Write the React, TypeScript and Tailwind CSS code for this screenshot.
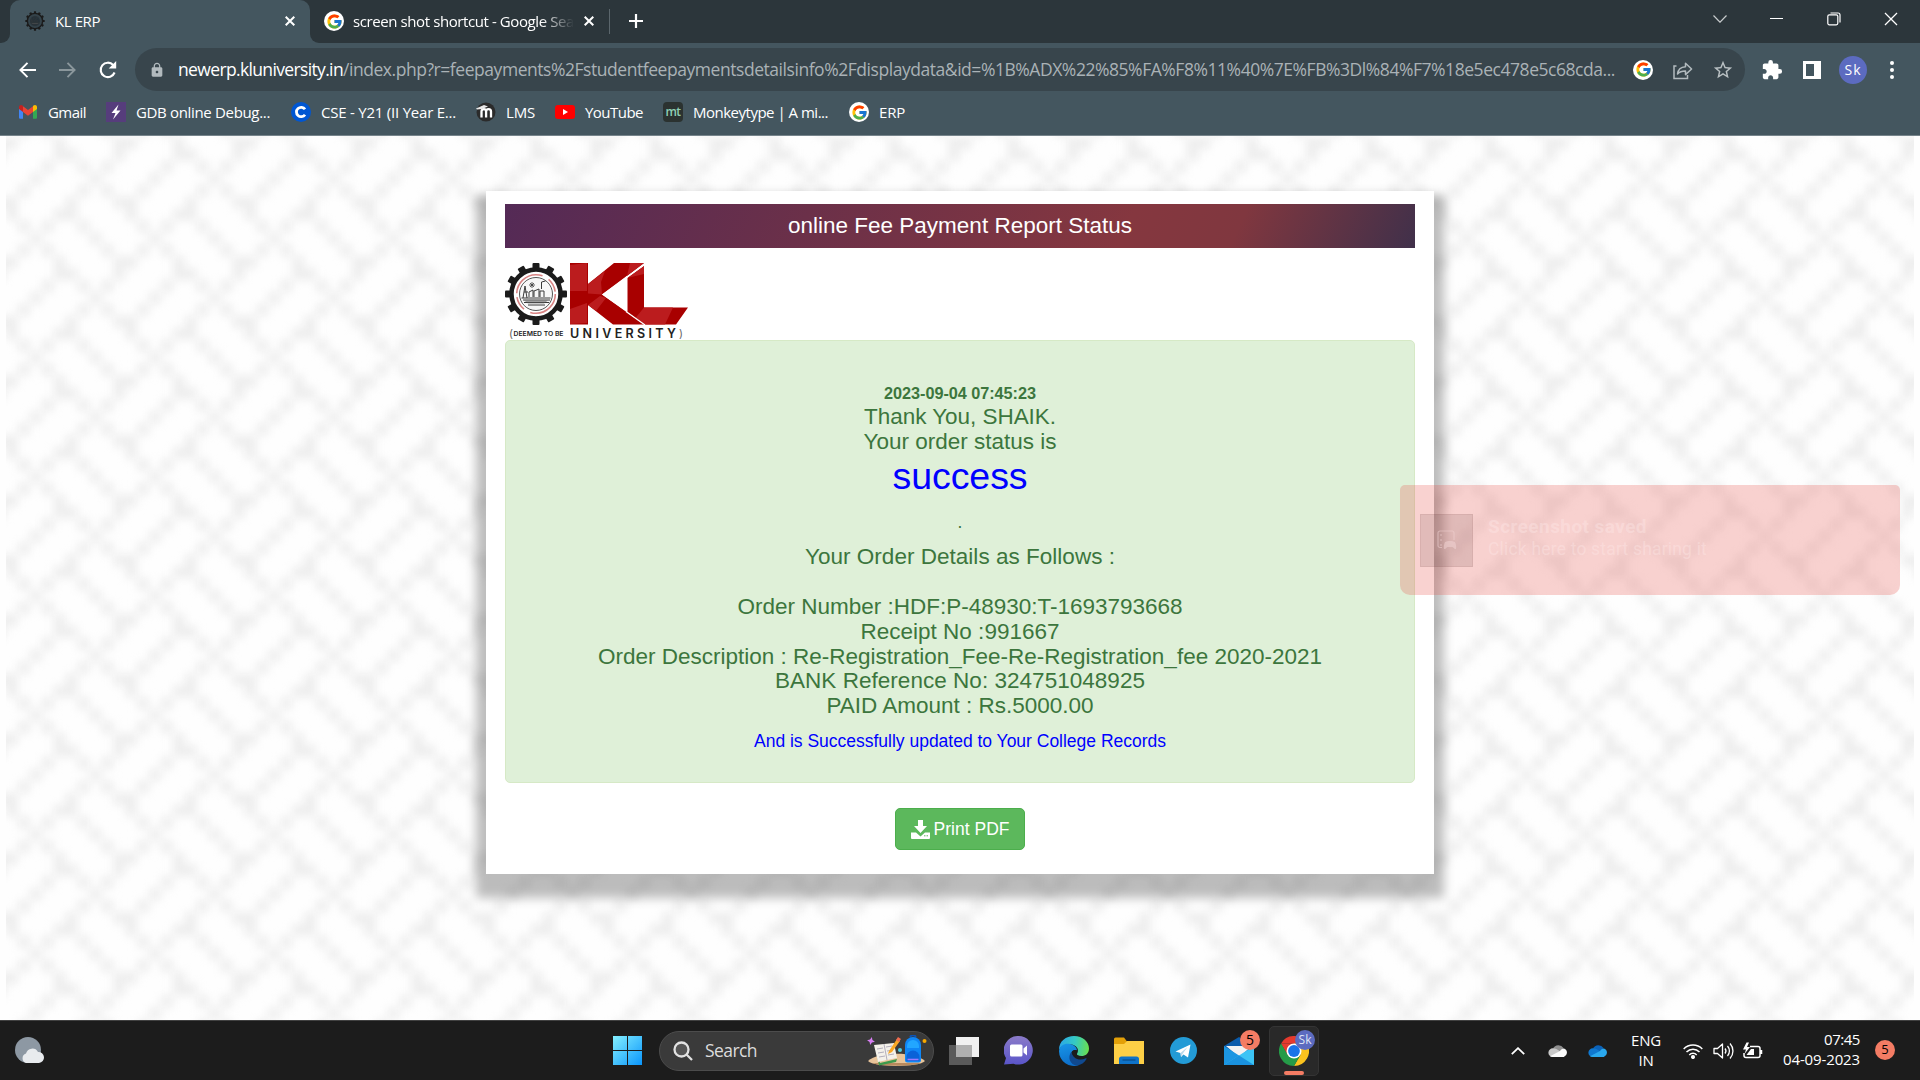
import React, { useLayoutEffect, useRef } from "react";
import { FcGoogle } from "react-icons/fc";
import { MdExtension, MdLock, MdStarBorder } from "react-icons/md";

/** Single line of text whose tracking is adjusted so it fills the given width. */
function Fit({ w, className = "", children }: { w: number; className?: string; children: React.ReactNode }) {
  const ref = useRef<HTMLSpanElement>(null);
  useLayoutEffect(() => {
    const el = ref.current;
    if (!el) return;
    const apply = () => {
      el.style.letterSpacing = "0px";
      const n = (el.textContent || "").length;
      const natural = el.getBoundingClientRect().width;
      el.style.letterSpacing = `${(w - natural) / n}px`;
    };
    apply();
    document.fonts?.ready.then(apply);
  }, [w]);
  return (
    <span ref={ref} className={`inline-block whitespace-pre ${className}`}>
      {children}
    </span>
  );
}

function GoogleBadge() {
  return (
    <span className="flex size-5 shrink-0 items-center justify-center rounded-full bg-white">
      <FcGoogle size={17} />
    </span>
  );
}

const teeth = Array.from({ length: 12 }, (_, i) => i * 30);

function Gear({ dark = false }: { dark?: boolean }) {
  return (
    <g>
      {teeth.map((a) => (
        <rect key={a} x="-3.500" y="-31" width="7" height="9" rx="1" fill="#1b1b1b" transform={`rotate(${a})`} />
      ))}
      <circle r="24.5" fill={dark ? "#34434b" : "#fff"} stroke="#1b1b1b" strokeWidth="4.500" />
      {!dark && <circle r="19.3" fill="none" stroke="#d98484" strokeWidth="1.6" strokeDasharray="36 7 14 4" />}
      <circle r="16.5" fill={dark ? "#25323a" : "#f7f7f7"} stroke="#444" strokeWidth="0.9" />
      <g stroke="#3a3a3a" strokeWidth="1" fill="none">
        <path d="M-13 6h27M-12 8.500h25M-8 11h17M-14.500 4h29" />
        <path d="M-7 3v-5l4-2v7M-2 3v-6l5-2v8M4 3v-6h4v6M5.500 -5v-7l4-1M-13 4l2-12 2 12M-12 -2h4" />
        <path d="M-4 -12v6M-7 -9h6M-6 -11l4 4M-2 -11l-4 4" strokeWidth="0.8" />
      </g>
      <path d="M-12 6.500h24l-4 3h-16z" fill="#555" opacity=".55" />
    </g>
  );
}

function Close({ size = 10, w = 2 }: { size?: number; w?: number }) {
  return (
    <svg width={size} height={size} viewBox="0 0 10 10" className="shrink-0">
      <path d="M.7 .7l8.600 8.600M9.300 .7L.7 9.300" stroke="#fff" strokeWidth={w} />
    </svg>
  );
}

function TabStrip() {
  return (
    <div className="flex h-[43px] bg-[#2c363b] text-white">
      <div className="flex w-[10px] items-end bg-[#44565f]">
        <div className="h-full w-full rounded-br-[9px] bg-[#2c363b]" />
      </div>
      <div className="flex w-[300px] items-center rounded-t-[10px] bg-[#44565f] pr-[15px] pb-px pl-[15px]">
        <svg width="20" height="20" viewBox="-32 -32 64 64">
          <Gear dark />
        </svg>
        <div className="ml-[10px] flex-1 text-[15px]">
          <Fit w={45}>KL ERP</Fit>
        </div>
        <Close />
      </div>
      <div className="flex bg-[#44565f]">
        <div className="flex w-[300px] items-center rounded-bl-[9px] bg-[#2c363b] pb-px pl-[14px]">
          <GoogleBadge />
          <div className="ml-[9px] w-[221px] text-[15px] [mask-image:linear-gradient(to_right,black_85%,transparent)]">
            <Fit w={221}>screen shot shortcut - Google Sea</Fit>
          </div>
          <div className="ml-[10px]">
            <Close />
          </div>
          <div className="ml-[15px] h-[25px] w-px shrink-0 bg-[#5b666c]" />
        </div>
      </div>
      <div className="flex flex-1 items-center bg-[#2c363b] pb-px pl-[19px]">
        <svg width="14" height="14" viewBox="0 0 14 14">
          <path d="M7 0v14M0 7h14" stroke="#fff" strokeWidth="2.200" />
        </svg>
      </div>
      <div className="flex h-[37px] items-center bg-[#2c363b] pr-px text-white">
        <div className="flex w-[57px] justify-center">
          <svg width="14" height="8" viewBox="0 0 14 8">
            <path d="M.5 .5L7 7.200 13.500 .5" fill="none" stroke="#c8cccd" strokeWidth="1.200" />
          </svg>
        </div>
        <div className="flex w-[57px] justify-center">
          <div className="h-px w-[13px] bg-white" />
        </div>
        <div className="flex w-[57px] justify-center">
          <svg width="14" height="14" viewBox="0 0 14 14" fill="none" stroke="#fff" strokeWidth="1.200">
            <rect x=".8" y="2.800" width="10" height="10" rx="1.500" />
            <path d="M3.500 1h7.500a2 2 0 0 1 2 2v7.500" />
          </svg>
        </div>
        <div className="flex w-[57px] justify-center">
          <Close size={14} w={0.9} />
        </div>
      </div>
    </div>
  );
}

function Toolbar() {
  return (
    <div className="flex h-[53px] items-center bg-[#44565f]">
      <div className="flex w-[135px] items-center pl-[19px]">
        <svg width="17" height="16" viewBox="0 0 17 16" fill="none" stroke="#fff" strokeWidth="1.900">
          <path d="M17 8H1.800M8.500 .8L1.400 8l7.100 7.200" />
        </svg>
        <svg width="17" height="16" viewBox="0 0 17 16" fill="none" stroke="#8b979c" strokeWidth="1.900" className="ml-[23px]">
          <path d="M0 8h15.200M8.500 .8L15.600 8l-7.100 7.200" />
        </svg>
        <svg width="18" height="18" viewBox="0 0 18 18" className="ml-[23px]">
          <path d="M15.600 11.500A7.200 7.200 0 1 1 14.200 4" fill="none" stroke="#fff" strokeWidth="2.100" />
          <path d="M17.200 0v7.500H9.700z" fill="#fff" />
        </svg>
      </div>
      <div className="flex h-[43px] w-[1610px] items-center rounded-full bg-[#38454c] pl-[14px]">
        <MdLock size={16} color="#b2babe" />
        <div className="ml-[13px] flex w-[1439px] text-[17.5px] text-[#aab2b6]">
          <Fit w={165} className="text-white">newerp.kluniversity.in</Fit>
          <Fit w={1272}>
            /index.php?r=feepayments%2Fstudentfeepaymentsdetailsinfo%2Fdisplaydata&amp;id=%1B%ADX%22%85%FA%F8%11%40%7E%FB%3Dl%84%F7%18e5ec478e5c68cda...
          </Fit>
        </div>
        <div className="ml-[16px]">
          <GoogleBadge />
        </div>
        <svg width="20" height="20" viewBox="0 0 20 20" fill="none" stroke="#b2babe" strokeWidth="1.500" className="ml-[20px]">
          <path d="M3.500 6H1v12.500h13.500V15" />
          <path d="M4.500 14c.5-4.500 3-7 8-7.300V3.200L18.600 9l-6.100 5.600v-3.500c-3.500 0-6 .7-8 2.900z" strokeLinejoin="round" />
        </svg>
        <MdStarBorder size={22} color="#b9c0c3" className="ml-[19px]" />
      </div>
      <div className="flex flex-1 items-center text-white">
        <MdExtension size={22} className="ml-[16px]" />
        <div className="ml-[20px] h-[18px] w-[18px] border-[3px] border-r-[7px] border-white" />
        <div className="ml-[18px] flex size-7 items-center justify-center rounded-full bg-[#5c6bc0] text-[14px]">
          <Fit w={17}>Sk</Fit>
        </div>
        <div className="ml-[23px] flex flex-col gap-[3px]">
          <i className="size-1 rounded-full bg-white" />
          <i className="size-1 rounded-full bg-white" />
          <i className="size-1 rounded-full bg-white" />
        </div>
      </div>
    </div>
  );
}

function Gmail() {
  return (
    <svg width="20" height="20" viewBox="0 0 20 20">
      <path d="M1 5v10.500c0 .8.6 1.300 1.300 1.300H5V8z" fill="#4285f4" />
      <path d="M19 5v10.500c0 .8-.6 1.300-1.300 1.300H15V8z" fill="#34a853" />
      <path d="M5 4.200V10l5 3.800 5-3.800V4.200L10 8z" fill="#ea4335" />
      <path d="M1 5c0-2 2.200-2.600 3.500-1.500L5 4v6L1 7z" fill="#c5221f" />
      <path d="M19 5c0-2-2.200-2.600-3.500-1.500L15 4v6l4-3z" fill="#fbbc04" />
    </svg>
  );
}

function Bookmark({ icon, w, total, children }: { icon: React.ReactNode; w: number; total: string; children: string }) {
  return (
    <div className={`flex items-center ${total}`}>
      <span className="mr-[10px] flex size-5 shrink-0 items-center justify-center">{icon}</span>
      <Fit w={w}>{children}</Fit>
    </div>
  );
}

function Bookmarks() {
  return (
    <div className="flex h-[40px] items-center border-b border-[#76848b] bg-[#44565f] pb-[7px] pl-[18px] text-[15px] leading-5 text-white">
      <Bookmark total="w-[88px]" w={38} icon={<Gmail />}>Gmail</Bookmark>
      <Bookmark
        total="w-[185px]"
        w={134}
        icon={
          <svg width="20" height="20" viewBox="0 0 20 20">
            <path d="M0 0h20v20H0z" fill="#563d7c" />
            <path d="M12.500 2.500L5.500 11h4L7 17.500l7.500-9H10.500z" fill="#fff" />
          </svg>
        }
      >
        GDB online Debug...
      </Bookmark>
      <Bookmark
        total="w-[185px]"
        w={135}
        icon={
          <svg width="20" height="20" viewBox="0 0 20 20">
            <circle cx="10" cy="10" r="10" fill="#0056d2" />
            <path d="M14 7.300A4.700 4.700 0 1 0 14 12.700" fill="none" stroke="#fff" strokeWidth="2.800" />
          </svg>
        }
      >
        CSE - Y21 (II Year E...
      </Bookmark>
      <Bookmark
        total="w-[79px]"
        w={29}
        icon={
          <svg width="20" height="20" viewBox="0 0 20 20">
            <circle cx="10" cy="10" r="9.500" fill="#2b2b2b" />
            <path d="M5.500 15.500V9.500a2.300 2.300 0 0 1 4.600 0v6M10.100 15.500V9.500a2.300 2.300 0 0 1 4.900 0v6" fill="none" stroke="#fff" strokeWidth="2.300" />
            <path d="M0 6.500l8-3.500 4 1.500-6 2.500-5 .5z" fill="#e8e8e8" />
          </svg>
        }
      >
        LMS
      </Bookmark>
      <Bookmark
        total="w-[108px]"
        w={58}
        icon={
          <svg width="20" height="20" viewBox="0 0 20 20">
            <rect y="3" width="20" height="14" rx="3" fill="#f00" />
            <path d="M8 7l5 3-5 3z" fill="#fff" />
          </svg>
        }
      >
        YouTube
      </Bookmark>
      <Bookmark
        total="w-[186px]"
        w={135}
        icon={
          <span className="flex size-5 items-center justify-center rounded-[4px] bg-[#2b3230] text-[12px] font-semibold text-[#8fd0b4]">
            <Fit w={15}>mt</Fit>
          </span>
        }
      >
        Monkeytype | A mi...
      </Bookmark>
      <Bookmark total="w-[80px]" w={26} icon={<GoogleBadge />}>ERP</Bookmark>
    </div>
  );
}

const cells: [number, number][] = [
  [7, 3], [8, 2], [6, 2], [6, 4], [8, 4], [3, 2], [2, 3], [1, 4], [4, 0], [4, 1], [5, 1],
  [9, 0], [0, 0], [9, 1], [9, 5], [0, 5], [0, 6], [4, 6], [5, 6], [5, 5], [1, 7], [3, 7],
  [2, 8], [1, 9], [3, 9], [6, 7], [7, 8], [8, 9],
];

function Lattice() {
  return (
    <svg className="absolute top-0 left-0" width="1908" height="885">
      <defs>
        <pattern id="lattice" width="10" height="10" patternUnits="userSpaceOnUse" patternTransform="translate(0 1) scale(11.925)">
          {cells.map(([x, y]) => (
            <rect key={`${x}-${y}`} x={x} y={y} width="1" height="1" fill="#eeeeee" />
          ))}
        </pattern>
        <filter id="soft" x="0" y="0" width="1" height="1" colorInterpolationFilters="sRGB">
          <feGaussianBlur stdDeviation="4" />
        </filter>
      </defs>
      <rect x="-40" y="-40" width="1990" height="970" fill="url(#lattice)" filter="url(#soft)" />
    </svg>
  );
}

function Logo() {
  return (
    <svg width="184" height="77" viewBox="0 0 184 77" className="block">
      <g transform="translate(31 31)">
        <Gear />
      </g>
      <path d="M65 0h18v21L109 0h30L97 31.500 139 61.500H108L83 42v19.500H65z" fill="#a80000" />
      <path d="M65 2l17-2v28L65 28zM125 0h14l-17 13zM83 42l12-9 6 2-10 13zM65 46l17-6v20l-17 1z" fill="#bb1c1e" />
      <path d="M83 21L100 8l-4 11 1 12.500-14-1z" fill="#bb1c1e" />
      <path d="M122 15L139 3v41.500h44L171 61.500H139L122 49z" fill="#a80000" />
      <path d="M122 15L139 3v8zM139 44.500h29l-8 17H139l-9-6z" fill="#bb1c1e" />
      <path d="M97 31.500L122.500 13v36z" fill="#fff" />
      <path d="M121 15L139.500 1.500M121 48.500L140 62" stroke="#fff" strokeWidth="1.300" />
      <g fill="#222" style={{ fontFamily: "Inter, 'Liberation Sans', sans-serif" }}>
        <text x="4" y="74" fontSize="11" textLength="4" lengthAdjust="spacingAndGlyphs" fill="#666">(</text>
        <text x="8.500" y="72.500" fontSize="6.200" fontWeight="600" textLength="50" lengthAdjust="spacingAndGlyphs">DEEMED TO BE</text>
        <text x="65" y="74.500" fontSize="12.500" fontWeight="600" textLength="106">UNIVERSITY</text>
        <text x="174" y="74" fontSize="11" textLength="4" lengthAdjust="spacingAndGlyphs" fill="#666">)</text>
      </g>
    </svg>
  );
}

function Card() {
  return (
    <div className="relative mx-auto h-[683px] w-[948px] bg-white px-[19px] pt-[13px] text-center font-['Liberation_Sans',Arial,sans-serif] shadow-[0_14px_10px_10px_rgba(0,0,0,0.26)]">
      <h4 className="h-[44px] bg-[linear-gradient(115deg,#542a56_0%,#6b3049_33%,#85373f_68%,#80373f_80%,#40304a_100%)] text-[22.5px] leading-[43px] text-white">
        <Fit w={344}>online Fee Payment Report Status</Fit>
      </h4>
      <div className="mt-[15px]">
        <Logo />
      </div>
      <div className="h-[443px] rounded-[5px] border border-[#d6e9c6] bg-[#dff0d8] pt-[40.5px] text-[22.5px] leading-[24.75px] text-[#3c763d]">
        <div className="text-[16.25px] leading-[23.5px] font-bold"><Fit w={152}>2023-09-04 07:45:23</Fit></div>
        <div><Fit w={192}>Thank You, SHAIK.</Fit></div>
        <div><Fit w={193}>Your order status is</Fit></div>
        <div className="pt-[1.5px] text-[37.5px] leading-[41.25px] text-[#0000ff]"><Fit w={135}>success</Fit></div>
        <div className="mt-[13px] text-[17.5px] leading-[25px]">.</div>
        <div className="mt-[10px]"><Fit w={310}>Your Order Details as Follows :</Fit></div>
        <div className="mt-[25px]"><Fit w={445}>Order Number :HDF:P-48930:T-1693793668</Fit></div>
        <div><Fit w={199}>Receipt No :991667</Fit></div>
        <div><Fit w={724}>Order Description : Re-Registration_Fee-Re-Registration_fee 2020-2021</Fit></div>
        <div><Fit w={370}>BANK Reference No: 324751048925</Fit></div>
        <div><Fit w={267}>PAID Amount : Rs.5000.00</Fit></div>
        <div className="mt-[10px] text-[17.5px] leading-[25px] text-[#0000ff]"><Fit w={412}>And is Successfully updated to Your College Records</Fit></div>
      </div>
      <button className="mt-[25px] inline-flex h-[42px] w-[130px] items-center justify-center rounded-[5px] border border-[#4cae4c] bg-[#5cb85c] text-[17.5px] text-white">
        <svg width="19" height="19" viewBox="0 0 19 19" fill="#fff" className="mr-[4px]">
          <path d="M7 0h5v6h4l-6.500 7L3 6h4z" />
          <path d="M0 12.500h5l4.500 4 4.500-4h5V18a1 1 0 0 1-1 1H1a1 1 0 0 1-1-1z" />
          <path d="M13 15.800h1.500M15.500 15.800H17" stroke="#5cb85c" strokeWidth="1" />
        </svg>
        <Fit w={76}>Print PDF</Fit>
      </button>
    </div>
  );
}

function Toast() {
  return (
    <div className="absolute top-[349px] left-[1394px] flex h-[110px] w-[500px] items-center rounded-t-[5px] rounded-b-[10px] bg-[rgba(232,74,66,0.25)] pl-[20px]">
      <div className="flex size-[53px] items-center justify-center border border-[rgba(140,80,80,0.1)] bg-[rgba(40,0,0,0.11)]">
        <svg width="20" height="20" viewBox="0 0 20 20" fill="none" stroke="#f3d5d5" strokeOpacity=".5" strokeWidth="1.200">
          <path d="M5 17.500H3a2 2 0 0 1-2-2V3a2 2 0 0 1 2-2h12a2 2 0 0 1 2 2v7M4 4v2M4 9v2M4 14v2" />
          <path d="M8 12c2-1.500 8-1.500 10 0 1 2 1.500 5 1 7-2 .5-2.500-2-4-2h-4c-1.500 0-2 2.500-4 2-.5-2 0-5 1-7z" fill="#f3d5d5" fillOpacity=".5" stroke="none" />
        </svg>
      </div>
      <div className="ml-[15px] -mt-[4px] font-['Roboto',sans-serif] text-[17.5px] leading-[23px] text-[rgba(255,235,235,0.36)]">
        <div className="text-[19px] font-bold"><Fit w={159}>Screenshot saved</Fit></div>
        <div><Fit w={219}>Click here to start sharing it</Fit></div>
      </div>
    </div>
  );
}

function Cloud({ a, b, c }: { a: string; b: string; c: string }) {
  return (
    <svg width="20" height="14" viewBox="0 0 20 14" className="shrink-0">
      <path d="M5 4.500A6 6 0 0 1 15.500 4l-4 4z" fill={a} />
      <path d="M4.500 13A4.300 4.300 0 0 1 5 4.300c2 0 3.500.7 5 1.700l4 2.500-9.500 4.500z" fill={b} />
      <path d="M2 12.300L12 7c1-2 3-3 4.500-2.300A4.500 4.500 0 0 1 15.800 13H4.500c-1 0-1.900-.2-2.500-.7z" fill={c} />
    </svg>
  );
}

function Start() {
  return (
    <svg width="29" height="29" viewBox="0 0 29 29">
      <defs>
        <linearGradient id="win" x1="0" y1="0" x2="29" y2="29" gradientUnits="userSpaceOnUse">
          <stop offset="0" stopColor="#84f0ff" />
          <stop offset="1" stopColor="#0a95fb" />
        </linearGradient>
      </defs>
      <path d="M0 0h14v14H0zM15 0h14v14H15zM0 15h14v14H0zM15 15h14v14H15z" fill="url(#win)" />
    </svg>
  );
}

function SchoolArt() {
  return (
    <svg width="60" height="32" viewBox="0 0 60 32">
      <path d="M1 26c10-9 46-10 57 0-4 6-50 7-57 0z" fill="#e8c49a" />
      <path d="M5 28h50c-9 3.500-40 3.500-50 0z" fill="#b98a5d" />
      <path d="M4 2l1.200 2.800L8 6 5.200 7.200 4 10 2.800 7.200 0 6l2.800-1.200z" fill="#d77ef2" transform="rotate(12 4 6)" />
      <path d="M8 11l5 17 17-4-1 3-17 3.500z" fill="#3d9a4c" />
      <path d="M7 10l10-1 10-1 3 15-10 2-9 2z" fill="#f4f1ea" />
      <path d="M17 9l3 16M10 14l6-1M11 18l6-1M12 22l6-1M19 12l6-1M20 16l6-1M21 20l6-1" stroke="#aaa6b5" strokeWidth=".9" />
      <path d="M22 16l8-12 3 2-8 11-4 2z" fill="#f9a825" />
      <path d="M29 5l2-3 3 2-2 3z" fill="#ef6c50" />
      <circle cx="33" cy="15" r="2" fill="#4ecbe0" />
      <circle cx="57.500" cy="6" r="2" fill="#f6a800" />
      <path d="M43 2a3.500 3.500 0 0 1 6 0" fill="none" stroke="#0b53b8" strokeWidth="2" />
      <path d="M38 10a8 8 0 0 1 16 0v15a2.500 2.500 0 0 1-2.500 2.500h-11A2.500 2.500 0 0 1 38 25z" fill="#0f86f5" />
      <path d="M40 11a6 6 0 0 1 12 0v2H40z" fill="#22a6ff" />
      <path d="M39.500 22a6.500 6.500 0 0 1 13 0v4h-13z" fill="#0a62d8" />
      <path d="M40.500 24.500h11" stroke="#9b7bff" strokeWidth="1.600" />
    </svg>
  );
}

function Edge() {
  return (
    <svg width="30" height="30" viewBox="0 0 30 30">
      <defs>
        <linearGradient id="e1" x1="0" y1="10" x2="30" y2="14" gradientUnits="userSpaceOnUse">
          <stop offset="0" stopColor="#2aa7e8" />
          <stop offset=".5" stopColor="#35c9c4" />
          <stop offset="1" stopColor="#6be04b" />
        </linearGradient>
        <linearGradient id="e2" x1="6" y1="8" x2="12" y2="30" gradientUnits="userSpaceOnUse">
          <stop offset="0" stopColor="#1793e6" />
          <stop offset="1" stopColor="#0c6cc8" />
        </linearGradient>
      </defs>
      <path d="M0 14C0 5 7 0 15 0c9 0 15 6 15 12.500 0 5-3.500 7.500-7.500 7.500-3.500 0-5-1.200-4.500-2.300 1.500-2 1.400-5.200-1-7.200C12 6.500 3 8 0 14z" fill="url(#e1)" />
      <path d="M0 15C1 9 6 7 11 8c4 .8 7 3.500 7 6.500-3-1.500-6 1-6 5 0 5 4 9.500 8 9.600A15 15 0 0 1 0 15z" fill="url(#e2)" />
      <path d="M12.500 15.500C8 21 11 29 18 29.500c4-.4 7.500-3 9.500-6.500.3-.7-.3-1-.8-.7-5.700 2.700-13.200 1-14.200-6.800z" fill="#10498f" />
      <path d="M12.700 16.500c.3-2 2.300-3.300 5.200-2 .2 1.200-.1 2.200-.7 3.200-.5 1 .8 2.300 4.500 2.300-4 1-8.500 0-9-3.500z" fill="#1c1c1c" />
    </svg>
  );
}

function ChromeIcon() {
  return (
    <svg width="30" height="30" viewBox="0 0 30 30">
      <path d="M2 7.500A15 15 0 0 1 28 7.500H15z" fill="#e53a2e" />
      <path d="M15 7.500H28A15 15 0 0 1 15 30L21.500 18.700z" fill="#fcc31e" />
      <path d="M2 7.500A15 15 0 0 0 15 30l6.500-11.300-13 0z" fill="#259b48" />
      <path d="M2 7.500L8.500 18.700 11 11 15 7.500z" fill="#e53a2e" />
      <path d="M2 7.500L8.700 19 12 22.500 8 22 1 12z" fill="#259b48" />
      <circle cx="15" cy="15" r="7.500" fill="#fff" />
      <circle cx="15" cy="15" r="5.900" fill="#1a73e8" />
    </svg>
  );
}

function Taskbar() {
  return (
    <div className="flex h-[60px] items-center border-t border-[#414141] bg-[#1c1c1c] text-white">
      <div className="w-[613px] pl-[14px]">
        <svg width="31" height="28" viewBox="0 0 31 28">
          <circle cx="14" cy="13" r="13" fill="#8d98a3" />
          <path d="M12 26a5 5 0 0 1 0-9.500 6.500 6.500 0 0 1 12-1.500 5.500 5.500 0 0 1 1 11z" fill="#e8ebee" />
        </svg>
      </div>
      <Start />
      <div className="ml-[17px] flex h-[40px] w-[275px] items-center rounded-full border border-[#4c4c4c] bg-[#3a3a3a] pl-[13px]">
        <svg width="20" height="20" viewBox="0 0 20 20" fill="none" stroke="#e2e2e2" strokeWidth="2.300">
          <circle cx="8.500" cy="8.500" r="7" fill="#555" />
          <path d="M13.500 13.500L19 19" />
        </svg>
        <div className="ml-[12px] w-[162px] text-[17.5px] text-[#dcdcdc]"><Fit w={52}>Search</Fit></div>
        <SchoolArt />
      </div>
      <svg width="30" height="28" viewBox="0 0 30 28" className="ml-[15px]">
        <path d="M0 8h23v20H0z" fill="#5a5a5a" />
        <path d="M7 0h23v20H7z" fill="#f1f1f1" />
        <path d="M7 8h16v12H7z" fill="#b0b0b0" />
      </svg>
      <svg width="29" height="29" viewBox="0 0 29 29" className="ml-[25px]">
        <defs>
          <linearGradient id="chat" x1="0" y1="0" x2="0" y2="1">
            <stop offset="0" stopColor="#8b7bc8" />
            <stop offset="1" stopColor="#5a55c9" />
          </linearGradient>
        </defs>
        <path d="M14.500 0a14.300 14.300 0 1 1-5 27.700L0 28.500l2-6.500A14.300 14.300 0 0 1 14.500 0z" fill="url(#chat)" />
        <rect x="6" y="8.500" width="12.500" height="12" rx="1.500" fill="#fff" />
        <path d="M19.500 12.500l3.500-3v10l-3.500-3z" fill="#fff" />
      </svg>
      <div className="ml-[26px]"><Edge /></div>
      <svg width="30" height="27" viewBox="0 0 30 27" className="ml-[25px]">
        <path d="M0 2a1.500 1.500 0 0 1 1.500-1.500H10l3 4v4H0z" fill="#e3a008" />
        <path d="M0 7h10l3-3h17v23H0z" fill="#fdcf46" />
        <path d="M5 27v-5a2.500 2.500 0 0 1 2.500-2.500h15A2.500 2.500 0 0 1 25 22v5z" fill="#0f73c9" />
        <path d="M8.500 23h13" stroke="#0a4f8f" strokeWidth="1.300" />
      </svg>
      <svg width="27" height="27" viewBox="0 0 27 27" className="ml-[26px]">
        <circle cx="13.500" cy="13.500" r="13.500" fill="#239bd6" />
        <path d="M5.500 14.500L20.500 7.500 18 20.500l-4.500-3-2.500 2.500-.5-4z" fill="#fff" />
        <path d="M10.500 16l7-6-5 7-1.500 3z" fill="#b9d8ea" />
      </svg>
      <div className="relative ml-[27px]">
        <svg width="30" height="28" viewBox="0 0 30 28" className="block">
          <path d="M0 9L15 0l15 9v8H0z" fill="#0b5cab" />
          <path d="M2 9h26L15 20z" fill="#f2f2f2" />
          <path d="M0 9l30 19H0z" fill="#1c96e2" />
          <path d="M30 9v19H0z" fill="#3cc4f5" />
          <path d="M15 18.500L30 28H0z" fill="#1a92df" />
        </svg>
        <span className="absolute -top-[7px] left-[16px] flex size-5 items-center justify-center rounded-full bg-[#f47c64] text-[14px] text-black">5</span>
      </div>
      <div className="relative ml-[15px] flex h-[50px] w-[50px] items-center justify-center rounded-[5px] border border-[#343434] bg-[#292929]">
        <ChromeIcon />
        <span className="absolute top-[3px] left-[25px] flex size-5 items-center justify-center rounded-full bg-[#5c6bc0] text-[12px] text-[#dfe3f5]">Sk</span>
        <span className="absolute bottom-0 left-[14px] h-1 w-5 rounded-full bg-[#f47c64]" />
      </div>
      <svg width="14" height="8" viewBox="0 0 14 8" className="ml-[192px]">
        <path d="M.8 7.200L7 1.200l6.200 6" fill="none" stroke="#fff" strokeWidth="1.800" />
      </svg>
      <div className="ml-[23px]"><Cloud a="#8f8f8f" b="#c9c9c9" c="#fafafa" /></div>
      <div className="ml-[20px]"><Cloud a="#0b62b8" b="#0f78d0" c="#2aa8ee" /></div>
      <div className="ml-[22px] flex w-[32px] flex-col items-center pb-[2px] text-[15px] leading-5">
        <Fit w={30}>ENG</Fit>
        <Fit w={15}>IN</Fit>
      </div>
      <svg width="20" height="16" viewBox="0 0 20 16" className="ml-[21px]" fill="none" stroke="#fff" strokeWidth="1.500">
        <path d="M.7 6a13 13 0 0 1 18.600 0M3.500 9a9 9 0 0 1 13 0M6.300 12a5 5 0 0 1 7.400 0" />
        <circle cx="10" cy="14" r="1.300" fill="#fff" />
      </svg>
      <svg width="21" height="18" viewBox="0 0 21 18" className="ml-[10px]" fill="none" stroke="#fff" strokeWidth="1.300">
        <path d="M1 6.500h3.500L9.500 2v14l-5-4.500H1z" strokeLinejoin="round" />
        <path d="M12 6.500a4 4 0 0 1 0 5M14.500 4a7.500 7.500 0 0 1 0 10M17 1.500a11 11 0 0 1 0 15" />
      </svg>
      <svg width="21" height="18" viewBox="0 0 21 18" className="ml-[8px]" fill="none" stroke="#fff" strokeWidth="1.500">
        <path d="M8 4.500h8a2 2 0 0 1 2 2v7a2 2 0 0 1-2 2H4a2 2 0 0 1-2-2V11M19.500 8v4" />
        <path d="M9 7h3v6H4.500z" fill="#fff" stroke="none" />
        <path d="M4.500 .5L1 7.500h3L2.500 12 8 5H5L7 .5z" fill="#fff" stroke="none" />
      </svg>
      <div className="flex w-[97px] flex-col items-end pb-[4px] text-[15px] leading-5">
        <Fit w={36}>07:45</Fit>
        <Fit w={77}>04-09-2023</Fit>
      </div>
      <span className="mb-px ml-[15px] flex size-5 items-center justify-center rounded-full bg-[#f47c64] text-[13px] text-black">5</span>
    </div>
  );
}

export default function App() {
  return (
    <div className="flex h-[1080px] w-[1920px] flex-col overflow-hidden bg-white font-['Open_Sans','Noto_Sans',sans-serif]">
      <TabStrip />
      <Toolbar />
      <Bookmarks />
      <div className="h-[884px] bg-[#fefefe] px-[6px]">
        <div className="relative h-full overflow-hidden pt-[55px]">
          <Lattice />
          <Card />
          <Toast />
        </div>
      </div>
      <Taskbar />
    </div>
  );
}
